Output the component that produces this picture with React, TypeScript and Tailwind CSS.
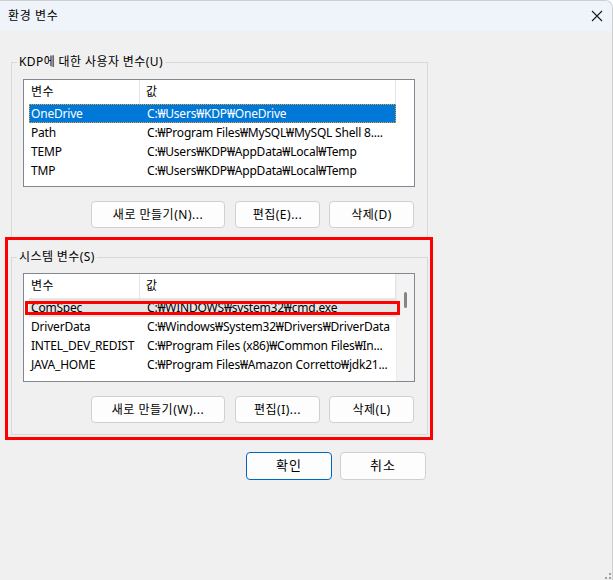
import React from "react";

type Row = { name: string; value: string };

const userVars: Row[] = [
  { name: "OneDrive", value: "C:₩Users₩KDP₩OneDrive" },
  { name: "Path", value: "C:₩Program Files₩MySQL₩MySQL Shell 8...." },
  { name: "TEMP", value: "C:₩Users₩KDP₩AppData₩Local₩Temp" },
  { name: "TMP", value: "C:₩Users₩KDP₩AppData₩Local₩Temp" },
];

const systemVars: Row[] = [
  { name: "ComSpec", value: "C:₩WINDOWS₩system32₩cmd.exe" },
  { name: "DriverData", value: "C:₩Windows₩System32₩Drivers₩DriverData" },
  { name: "INTEL_DEV_REDIST", value: "C:₩Program Files (x86)₩Common Files₩In..." },
  { name: "JAVA_HOME", value: "C:₩Program Files₩Amazon Corretto₩jdk21..." },
];

function ListBox({
  rows,
  selected,
  focused,
  scroll,
  height,
}: {
  rows: Row[];
  selected: number;
  focused: boolean;
  scroll?: boolean;
  height: string;
}) {
  return (
    <div className={`ml-[11px] w-[392px] ${height} border border-[#828790] bg-white flex overflow-hidden`}>
      <div className="w-[372px] shrink-0">
        {/* header */}
        <div className="flex h-[24px] pl-[5px]">
          <div className="w-[111px] pl-[2px] flex items-center border-r border-[#e5e5e5] tracking-[0.5px]">변수</div>
          <div className="w-[256px] pl-[6px] flex items-center border-r border-[#e5e5e5]">값</div>
        </div>
        {rows.map((r, i) => {
          const sel = i === selected;
          const bg = sel ? (focused ? "bg-[#0078d7] text-white outline-1 outline-dotted outline-[#f0a030] -outline-offset-1" : "bg-[#e5e5e5]") : "";
          return (
            <div key={r.name} className={`ml-[5px] w-[367px] h-[19px] flex items-center tracking-[-0.2px] ${bg}`}>
              <div className="w-[111px] pl-[2px] whitespace-nowrap overflow-hidden">{r.name}</div>
              <div className="flex-1 pl-[7px] whitespace-nowrap overflow-hidden">{r.value}</div>
            </div>
          );
        })}
      </div>
      {scroll && (
        <div className="flex-1 bg-[#f3f3f3] border-l border-[#ececec]">
          <div className="ml-[7px] mt-[18px] w-[3px] h-[16px] rounded-full bg-[#858585]" />
        </div>
      )}
    </div>
  );
}

function Btn({ label, w, primary, text = "text-[12px] tracking-[0.5px]" }: { label: string; w: string; primary?: boolean; text?: string }) {
  return (
    <button
      className={`${w} h-[27px] rounded-[4px] border ${primary ? "border-[#0067c0]" : "border-[#d0d0d0]"} bg-[#fdfdfd] ${text} text-black flex items-center justify-center`}
    >
      {label}
    </button>
  );
}

function Group({
  label,
  children,
  labelGap,
}: {
  label: string;
  children: React.ReactNode;
  labelGap: string;
}) {
  return (
    <div className="w-[417px] border border-[#d9d9d9] pb-[11px]">
      <div className={`-mt-[9px] ml-[5px] px-[2px] w-fit h-[16px] leading-[16px] bg-[#f0f0f0] tracking-[0.4px] ${labelGap}`}>{label}</div>
      {children}
    </div>
  );
}

export default function App() {
  return (
    <div className="relative w-[613px] h-[580px] bg-[#f0f0f0] text-[12px] text-black font-['Segoe_UI','Noto_Sans','Noto_Sans_CJK_KR',sans-serif] overflow-hidden rounded-tr-[8px] border-t border-r border-[#cfcfcf]">
      {/* title bar */}
      <div className="h-[30px] bg-[#eff3fa] flex items-center justify-between pl-[8px] pr-[8px]">
        <span className="text-[12px] tracking-[0.6px]">환경 변수</span>
        <svg width="12" height="12" viewBox="0 0 12 12" className="mr-[1px]">
          <path d="M1 1 L11 11 M11 1 L1 11" stroke="#1a1a1a" strokeWidth="1.1" fill="none" />
        </svg>
      </div>

      <div className="ml-[11px] w-[417px] flex flex-col">
        <div className="mt-[31px]">
          <Group label="KDP에 대한 사용자 변수(U)" labelGap="mb-[9px]">
            <ListBox rows={userVars} selected={0} focused height="h-[108px]" />
            <div className="flex pr-[13px] mt-[14px] justify-end">
              <Btn label="새로 만들기(N)..." w="w-[134px]" />
              <div className="w-[10px]" />
              <Btn label="편집(E)..." w="w-[85px]" />
              <div className="w-[9px]" />
              <Btn label="삭제(D)" w="w-[85px]" />
            </div>
          </Group>
        </div>

        <div className="mt-[17px]">
          <Group label="시스템 변수(S)" labelGap="mb-[8px]">
            <ListBox rows={systemVars} selected={0} focused={false} scroll height="h-[109px]" />
            <div className="flex pr-[13px] mt-[14px] justify-end">
              <Btn label="새로 만들기(W)..." w="w-[134px]" />
              <div className="w-[10px]" />
              <Btn label="편집(I)..." w="w-[85px]" />
              <div className="w-[9px]" />
              <Btn label="삭제(L)" w="w-[85px]" />
            </div>
          </Group>
        </div>

        <div className="mt-[17px] flex justify-end pr-[2px] gap-[8px]">
          <Btn label="확인" w="w-[86px] h-[28px]" primary text="text-[13px] tracking-[1px]" />
          <Btn label="취소" w="w-[86px] h-[28px]" text="text-[13px] tracking-[1px]" />
        </div>
      </div>

      {/* red annotation boxes */}
      <div className="absolute left-[5px] top-[236px] w-[428px] h-[203px] border-[3px] border-[#ff0000] pointer-events-none" />
      <div className="absolute left-[25px] top-[300px] w-[375px] h-[14px] border-[3px] border-[#ff0000] pointer-events-none" />

      {/* resize grip */}
      <svg className="absolute right-[1px] bottom-[1px]" width="6" height="6" viewBox="0 0 6 6">
        <rect x="4" y="0" width="2" height="2" fill="#a0a0a0" />
        <rect x="0" y="4" width="2" height="2" fill="#a0a0a0" />
        <rect x="4" y="4" width="2" height="2" fill="#a0a0a0" />
      </svg>
    </div>
  );
}
